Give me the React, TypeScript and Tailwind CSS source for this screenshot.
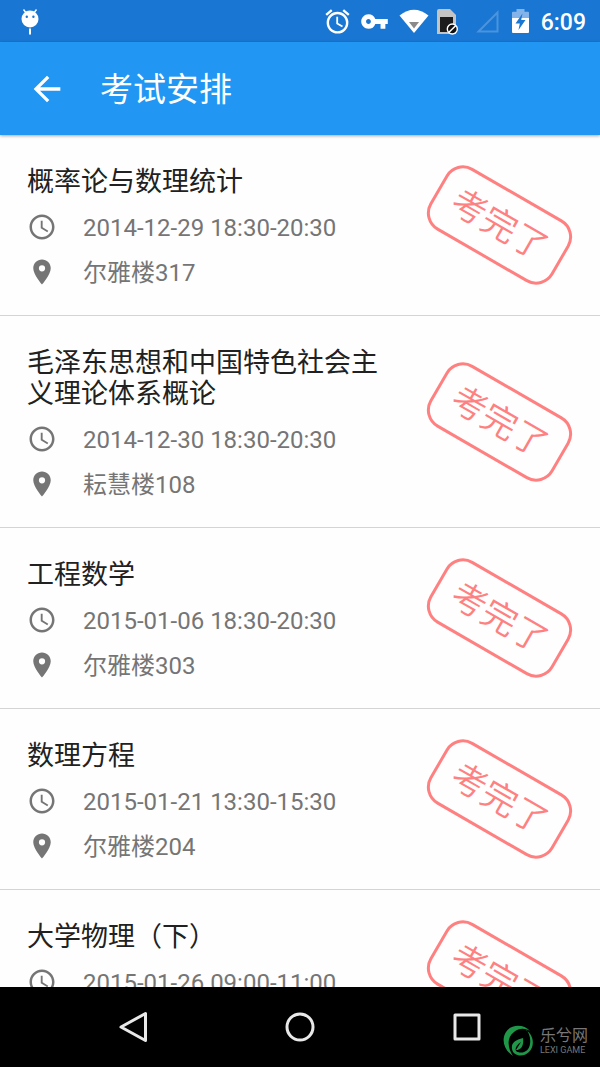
import { MdAccessAlarm, MdAccessTime, MdArrowBack, MdPlace, MdVpnKey } from 'react-icons/md'

interface Exam {
  name: string
  time: string
  place?: string
}

const exams: Exam[] = [
  { name: '概率论与数理统计', time: '2014-12-29 18:30-20:30', place: '尔雅楼317' },
  { name: '毛泽东思想和中国特色社会主义理论体系概论', time: '2014-12-30 18:30-20:30', place: '耘慧楼108' },
  { name: '工程数学', time: '2015-01-06 18:30-20:30', place: '尔雅楼303' },
  { name: '数理方程', time: '2015-01-21 13:30-15:30', place: '尔雅楼204' },
  { name: '大学物理（下）', time: '2015-01-26 09:00-11:00' },
]

function StatusBar() {
  return (
    <div className="flex h-[42px] shrink-0 items-center bg-[#1976d2] pl-5 pr-[14px] text-white">
      <svg className="h-[27px] w-5" viewBox="0 0 20 27" fill="none">
        <path d="M3.5 1.5l3 4M16.5 1.5l-3 4" stroke="white" strokeWidth="1.4" />
        <circle cx="10" cy="11" r="8.5" fill="white" />
        <circle cx="6.8" cy="8.8" r="1.2" fill="#1976d2" />
        <circle cx="13.4" cy="8.8" r="1.2" fill="#1976d2" />
        <path d="M10 20.5v6" stroke="white" strokeWidth="2" />
      </svg>
      <MdAccessAlarm className="ml-auto size-[29px]" />
      <MdVpnKey className="ml-2 size-[29px]" />
      <svg className="ml-[10px] h-6 w-[30px]" viewBox="0 0 30 24">
        <path d="M0.5 6.5Q15-5 29.5 6.5L15 24z" fill="white" />
        <path d="M10 13h10l-5 6.5z" fill="#8a8a8a" />
      </svg>
      <svg className="ml-[7px] h-[27px] w-[23px]" viewBox="0 0 23 27">
        <path d="M3 1h11l6 6v19H1V3q0-2 2-2z" fill="#c4c4c4" />
        <path d="M4 9h13v15H4z" fill="#1c1c1c" />
        <circle cx="16.3" cy="21" r="5" fill="#111" stroke="white" strokeWidth="1.4" />
        <path d="M13 24.2l6.6-6.4" stroke="white" strokeWidth="1.6" />
      </svg>
      <svg className="ml-4 h-6 w-[25px]" viewBox="0 0 25 24" fill="none">
        <path d="M3.5 22.5L22.5 3.5v19z" stroke="#4a93de" strokeWidth="2" />
      </svg>
      <svg className="ml-3 h-6 w-[17px]" viewBox="0 0 17 24">
        <path d="M4.5 0h8v2.8H16q1 0 1 1V9H0V3.8q0-1 1-1h3.5z" fill="#83b3e8" />
        <path d="M0 9h17v14q0 1-1 1H1q-1 0-1-1z" fill="white" />
        <path d="M10.5 4.5L3.5 14.5h4.3L6.5 21l7-10H9.2z" fill="#1976d2" />
      </svg>
      <span className="ml-3 pt-[2px] text-[23px] leading-none font-medium">6:09</span>
    </div>
  )
}

function Stamp() {
  return (
    <div className="mr-[2px] flex h-[72px] w-[143px] shrink-0 rotate-30 items-center justify-center rounded-[20px] border-3 border-[#ff8080] text-[35px] leading-none font-[350] text-[#ff8080]">
      考完了
    </div>
  )
}

function ExamRow({ exam }: { exam: Exam }) {
  return (
    <li className="flex shrink-0 items-center gap-[26px] border-b border-[#d4d4d4] px-[27px] py-[26px]">
      <div className="min-w-0 flex-1 pt-[6px]">
        <h2 className="mb-[14px] text-[27px] leading-[31px] text-[#212121]">{exam.name}</h2>
        <div className="space-y-[13px] text-[24px] leading-8 text-[#757575]">
          <p className="flex items-start gap-[26px] whitespace-nowrap">
            <MdAccessTime className="size-[30px] shrink-0" />
            {exam.time}
          </p>
          <p className="flex min-h-8 items-start gap-[26px] whitespace-nowrap">
            <MdPlace className="size-[30px] shrink-0" />
            {exam.place}
          </p>
        </div>
      </div>
      <Stamp />
    </li>
  )
}

function Watermark() {
  return (
    <div className="absolute right-3 bottom-[10px] flex items-center gap-[6px]">
      <svg className="size-8" viewBox="0 0 32 32">
        <path
          d="M28 6C22-1 9-1 4 7c-5 8-2 18 7 24C5 22 5 12 12 7c5-4 11-4 16-1z"
          fill="#1f9648"
        />
        <path
          d="M24 5c8 5 9 16 3 22-6 6-16 4-17-3-1-6 3-9 11-11 1 6-1 12-7 12l5-8c-6 4-7 9-3 10 5 2 11-1 12-8 1-6-1-11-4-15z"
          fill="#1f9648"
        />
      </svg>
      <div className="text-[#777777]">
        <p className="text-[16px] leading-[18px]">乐兮网</p>
        <p className="text-[9px] leading-[10px]">LEXI GAME</p>
      </div>
    </div>
  )
}

function NavBar() {
  return (
    <nav className="relative h-20 shrink-0 bg-black px-[50px]">
      <div className="grid h-full grid-cols-3 items-center justify-items-center">
        <button aria-label="Back">
          <svg className="size-8" viewBox="0 0 32 32" fill="none" stroke="#e8e8e8" strokeWidth="3" strokeLinejoin="round">
            <path d="M28.5 2.5v27L4 16z" />
          </svg>
        </button>
        <button aria-label="Home">
          <svg className="size-8" viewBox="0 0 32 32" fill="none" stroke="#e8e8e8" strokeWidth="3">
            <circle cx="16" cy="16" r="13" />
          </svg>
        </button>
        <button aria-label="Recent apps">
          <svg className="size-8" viewBox="0 0 32 32" fill="none" stroke="#e8e8e8" strokeWidth="3" strokeLinejoin="round">
            <path d="M4 4h24v24H4z" />
          </svg>
        </button>
      </div>
      <Watermark />
    </nav>
  )
}

export default function App() {
  return (
    <div className="flex h-screen flex-col bg-[#fefefe] font-[Roboto,'Noto_Sans_CJK_SC',sans-serif]">
      <StatusBar />
      <header className="z-10 flex h-[93px] shrink-0 items-center gap-[33px] bg-[#2196f3] px-[27px] text-white shadow-[0_1px_3px_rgba(0,0,0,0.35)]">
        <button aria-label="Back">
          <MdArrowBack className="size-10" />
        </button>
        <h1 className="pt-[2px] text-[33px] leading-none">考试安排</h1>
      </header>
      <ul className="min-h-0 flex-1 overflow-y-auto [scrollbar-width:none]">
        {exams.map((exam) => (
          <ExamRow key={exam.name} exam={exam} />
        ))}
      </ul>
      <NavBar />
    </div>
  )
}
